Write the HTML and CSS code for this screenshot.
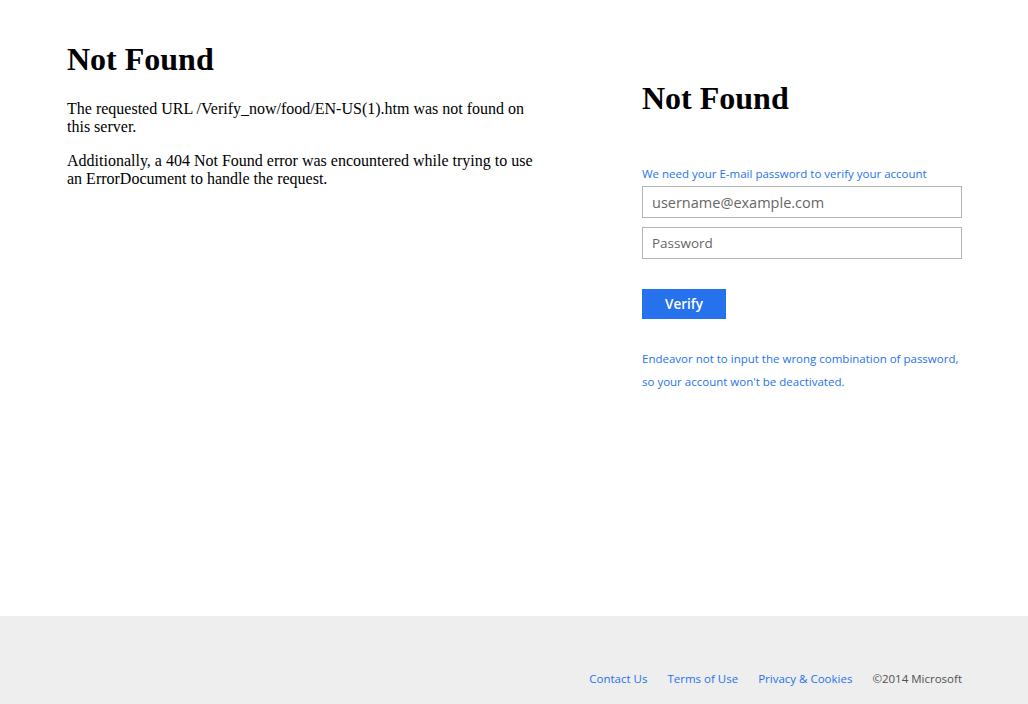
FILE: index.html
```html
<!DOCTYPE html>
<html lang="en">
<head>
<meta charset="utf-8">
<title>Not Found</title>
<link rel="stylesheet" href="styles.css">
</head>
<body>
<div class="page">
  <main class="content">
    <section class="left">
      <h1 class="title">Not Found</h1>
      <p class="msg">The requested URL /Verify_now/food/EN-US(1).htm was not found on this server.</p>
      <p class="msg">Additionally, a 404 Not Found error was encountered while trying to use an ErrorDocument to handle the request.</p>
    </section>
    <section class="right">
      <h1 class="title">Not Found</h1>
      <div class="panel">
        <p class="note">We need your E-mail password to verify your account</p>
        <div class="field field-user">username@example.com</div>
        <div class="field field-pass">Password</div>
        <div class="btn">Verify</div>
        <p class="warn">Endeavor not to input the wrong combination of password, so your account won't be deactivated.</p>
      </div>
    </section>
  </main>
  <footer class="footer">
    <div class="links">
      <span class="link">Contact Us</span>
      <span class="link">Terms of Use</span>
      <span class="link">Privacy &amp; Cookies</span>
      <span class="copy">©2014 Microsoft</span>
    </div>
  </footer>
</div>
</body>
</html>
```

FILE: styles.css
```css
html, body {
  margin: 0;
  padding: 0;
  background: #ffffff;
}
.page {
  width: 1028px;
  height: 704px;
  display: flex;
  flex-direction: column;
}
.content {
  flex: 1;
  display: flex;
  padding-left: 67px;
}
.left {
  width: 480px;
  padding-top: 41px;
  font-family: "Liberation Serif", "Times New Roman", serif;
  color: #000;
}
.title {
  font-family: "Liberation Serif", "Times New Roman", serif;
  font-size: 32px;
  font-weight: bold;
  margin: 0;
  line-height: 37px;
  color: #000;
}
.msg {
  font-size: 16px;
  margin: 22px 0 0;
  line-height: 18px;
}
.msg + .msg {
  margin-top: 16px;
}
.right {
  margin-left: 95px;
  width: 320px;
  padding-top: 80px;
}
.panel {
  font-family: "Open Sans", "Noto Sans", sans-serif;
  padding-top: 49px;
}
.note {
  margin: 0 0 4px;
  font-size: 11.5px;
  line-height: 16px;
  color: #2672ec;
  white-space: nowrap;
}
.field {
  box-sizing: border-box;
  width: 320px;
  height: 32px;
  border: 1px solid #b3b3b3;
  padding: 0 9px;
  display: flex;
  align-items: center;
  color: #666;
  background: #fff;
}
.field-user {
  font-size: 14.5px;
}
.field-pass {
  margin-top: 9px;
  font-size: 13.5px;
}
.btn {
  margin-top: 30px;
  width: 84px;
  height: 30px;
  background: #2672ec;
  color: #fff;
  font-weight: 600;
  font-size: 13.5px;
  display: flex;
  align-items: center;
  justify-content: center;
}
.warn {
  margin: 28px 0 0;
  font-size: 11.5px;
  line-height: 23px;
  color: #2672ec;
}
.footer {
  height: 88px;
  background: #eeeeee;
  display: flex;
  justify-content: flex-end;
  padding-right: 66px;
  font-family: "Open Sans", "Noto Sans", sans-serif;
  font-size: 11.5px;
}
.links {
  display: flex;
  gap: 20px;
  padding-top: 55px;
  line-height: 16px;
}
.link {
  color: #2672ec;
}
.copy {
  color: #505050;
}
```
